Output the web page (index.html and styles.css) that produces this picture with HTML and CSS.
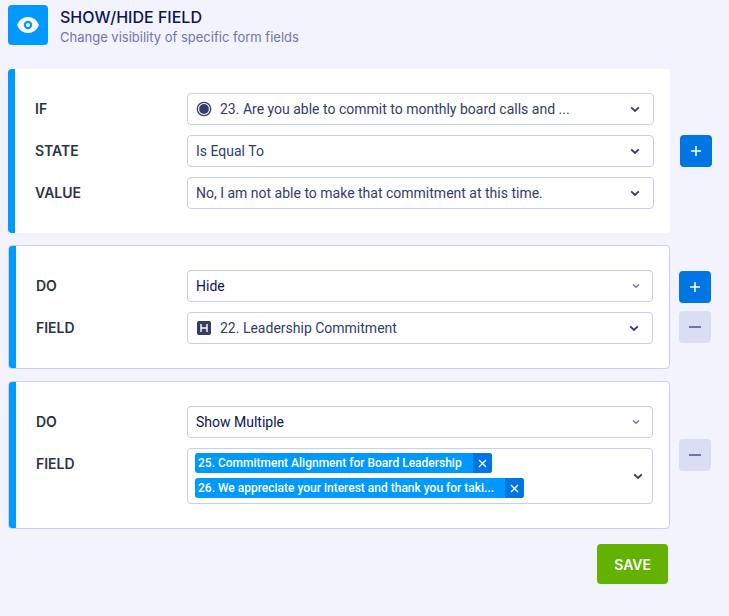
FILE: index.html
```html
<!DOCTYPE html>
<html lang="en">
<head>
    <meta charset="UTF-8">
    <meta name="viewport" content="width=device-width, initial-scale=1.0">
    <title>Show/Hide Field</title>
    <link rel="stylesheet" href="styles.css">
</head>
<body>
    <header class="header">
        <div class="header-icon">
            <svg width="22" height="16" viewBox="0 0 22 16" aria-hidden="true">
                <path fill="#fff" fill-rule="evenodd" d="M11 0C6 0 2.4 3 .4 7.2a1.8 1.8 0 0 0 0 1.6C2.4 13 6 16 11 16s8.600-3 10.600-7.200a1.800 1.800 0 0 0 0-1.600C19.600 3 16 0 11 0Zm0 3.800a4.200 4.200 0 1 1 0 8.400 4.200 4.200 0 0 1 0-8.400Z"/>
                <circle cx="11" cy="8" r="2" fill="#fff"/>
            </svg>
        </div>
        <div class="header-text">
            <h1>SHOW/HIDE FIELD</h1>
            <p>Change visibility of specific form fields</p>
        </div>
    </header>

    <form class="rules">
        <section class="rule">
            <div class="card">
                <div class="row">
                    <label for="if-field">IF</label>
                    <div class="select has-icon">
                        <select id="if-field">
                            <option>23. Are you able to commit to monthly board calls and ...</option>
                        </select>
                        <svg class="type-icon" width="16" height="16" viewBox="0 0 16 16" aria-hidden="true">
                            <circle cx="8" cy="8" r="6.700" fill="none" stroke="#343c6a" stroke-width="1.300"/>
                            <circle cx="8" cy="8" r="4.900" fill="#343c6a"/>
                        </svg>
                        <svg class="arrow" width="10" height="8" viewBox="0 0 10 8" aria-hidden="true"><path d="M1.200 2.400 5 6l3.800-3.600"/></svg>
                    </div>
                </div>
                <div class="row">
                    <label for="if-state">STATE</label>
                    <div class="select">
                        <select id="if-state">
                            <option>Is Equal To</option>
                        </select>
                        <svg class="arrow" width="10" height="8" viewBox="0 0 10 8" aria-hidden="true"><path d="M1.200 2.400 5 6l3.800-3.600"/></svg>
                    </div>
                </div>
                <div class="row">
                    <label for="if-value">VALUE</label>
                    <div class="select">
                        <select id="if-value">
                            <option>No, I am not able to make that commitment at this time.</option>
                        </select>
                        <svg class="arrow" width="10" height="8" viewBox="0 0 10 8" aria-hidden="true"><path d="M1.200 2.400 5 6l3.800-3.600"/></svg>
                    </div>
                </div>
            </div>
            <div class="actions">
                <button type="button" class="btn-add" aria-label="Add condition">
                    <svg width="12" height="12" viewBox="0 0 12 12" aria-hidden="true"><path d="M6 1v10M1 6h10"/></svg>
                </button>
            </div>
        </section>

        <section class="rule rule-action">
            <div class="card">
                <div class="row">
                    <label for="do-hide">DO</label>
                    <div class="select plain">
                        <select id="do-hide">
                            <option>Hide</option>
                            <option>Show</option>
                        </select>
                        <svg class="arrow" width="8" height="6" viewBox="0 0 8 6" aria-hidden="true"><path d="M1 1.500l3 2.800 3-2.800"/></svg>
                    </div>
                </div>
                <div class="row">
                    <label for="hide-field">FIELD</label>
                    <div class="select has-icon">
                        <select id="hide-field">
                            <option>22. Leadership Commitment</option>
                        </select>
                        <svg class="type-icon" width="16" height="16" viewBox="0 0 16 16" aria-hidden="true">
                            <rect x="1" y="1" width="14" height="14" rx="2" fill="#343c6a"/>
                            <path d="M5 4v8M11 4v8M5 8h6" fill="none" stroke="#fff" stroke-width="1.400"/>
                        </svg>
                        <svg class="arrow" width="10" height="8" viewBox="0 0 10 8" aria-hidden="true"><path d="M1.200 2.400 5 6l3.800-3.600"/></svg>
                    </div>
                </div>
            </div>
            <div class="actions">
                <button type="button" class="btn-add" aria-label="Add action">
                    <svg width="12" height="12" viewBox="0 0 12 12" aria-hidden="true"><path d="M6 1v10M1 6h10"/></svg>
                </button>
                <button type="button" class="btn-remove" aria-label="Remove action">
                    <svg width="12" height="12" viewBox="0 0 12 12" aria-hidden="true"><path d="M0 6h12"/></svg>
                </button>
            </div>
        </section>

        <section class="rule rule-action">
            <div class="card">
                <div class="row">
                    <label for="do-show">DO</label>
                    <div class="select plain">
                        <select id="do-show">
                            <option>Show Multiple</option>
                            <option>Hide Multiple</option>
                        </select>
                        <svg class="arrow" width="8" height="6" viewBox="0 0 8 6" aria-hidden="true"><path d="M1 1.500l3 2.800 3-2.800"/></svg>
                    </div>
                </div>
                <div class="row">
                    <label for="show-fields">FIELD</label>
                    <div class="multi">
                        <ul class="tags">
                            <li class="tag">
                                <span>25. Commitment Alignment for Board Leadership</span>
                                <button type="button" aria-label="Remove field 25">
                                    <svg width="9" height="9" viewBox="0 0 9 9" aria-hidden="true"><path d="M1 1l7 7M8 1 1 8"/></svg>
                                </button>
                            </li>
                            <li class="tag">
                                <span>26. We appreciate your interest and thank you for taki...</span>
                                <button type="button" aria-label="Remove field 26">
                                    <svg width="9" height="9" viewBox="0 0 9 9" aria-hidden="true"><path d="M1 1l7 7M8 1 1 8"/></svg>
                                </button>
                            </li>
                        </ul>
                        <button type="button" id="show-fields" class="multi-toggle" aria-haspopup="listbox">
                            <svg class="arrow" width="10" height="8" viewBox="0 0 10 8" aria-hidden="true"><path d="M1.200 2.400 5 6l3.800-3.600"/></svg>
                        </button>
                    </div>
                </div>
            </div>
            <div class="actions">
                <button type="button" class="btn-remove" aria-label="Remove action">
                    <svg width="12" height="12" viewBox="0 0 12 12" aria-hidden="true"><path d="M0 6h12"/></svg>
                </button>
            </div>
        </section>

        <div class="footer">
            <button type="submit" class="btn-save">SAVE</button>
        </div>
    </form>
</body>
</html>
```
FILE: styles.css
```css
:root {
    --bg: #f3f3fe;
    --navy: #0a1551;
    --text: #343c6a;
    --label: #2c3345;
    --muted: #6f76a7;
    --border: #c8ceed;
    --blue: #0099ff;
    --blue-dark: #0075e3;
    --green: #64b200;
}

* {
    margin: 0;
    padding: 0;
    box-sizing: border-box;
}

body {
    font-family: Inter, "Liberation Sans", sans-serif;
    font-size: 13px;
    background: var(--bg);
    color: var(--text);
    padding: 5px 17px 32px 8px;
}

svg {
    display: block;
}

button {
    border: none;
    cursor: pointer;
    font-family: inherit;
}

.header {
    display: flex;
    gap: 12px;
    margin-bottom: 24px;
}

.header-icon {
    display: flex;
    align-items: center;
    justify-content: center;
    width: 40px;
    height: 40px;
    border-radius: 4px;
    background: var(--blue);
}

.header h1 {
    font-size: 16px;
    font-weight: 500;
    line-height: 24px;
    color: var(--navy);
}

.header p {
    line-height: 16px;
    color: var(--muted);
}

.rules {
    display: flex;
    flex-direction: column;
    gap: 12px;
}

.rule {
    display: flex;
    align-items: center;
    gap: 10px;
}

.rule-action {
    gap: 9px;
    padding-right: 1px;
}

.card {
    flex: 1;
    min-width: 0;
    display: flex;
    flex-direction: column;
    gap: 10px;
    padding: 24px 16px 24px 27px;
    border-radius: 4px;
    background: linear-gradient(to right, var(--blue) 7px, #fff 7px);
}

.rule-action .card {
    border: 1px solid var(--border);
}

.row {
    display: grid;
    grid-template-columns: 152px 1fr;
}

.rule-action .row {
    grid-template-columns: 151px 1fr;
}

.row label {
    font-size: 14px;
    font-weight: 600;
    line-height: 32px;
    color: var(--label);
}

/* select, type icon and arrow share one grid cell */
.select {
    display: grid;
    align-items: center;
    min-width: 0;
}

.select > * {
    grid-area: 1 / 1;
}

.select select {
    appearance: none;
    width: 100%;
    height: 32px;
    padding: 0 32px 0 8px;
    border: 1px solid var(--border);
    border-radius: 4px;
    background: #fff;
    color: var(--text);
    font-family: Roboto, "Liberation Sans", sans-serif;
    font-size: 14px;
}

.has-icon select {
    padding-left: 32px;
}

.plain select {
    color: var(--navy);
}

.type-icon {
    margin-left: 9px;
    pointer-events: none;
}

.arrow {
    justify-self: end;
    margin-right: 14px;
    fill: none;
    stroke: var(--text);
    stroke-width: 1.8;
    pointer-events: none;
}

.plain .arrow {
    stroke: var(--muted);
    stroke-width: 1.5;
    margin-right: 13px;
}

.multi {
    display: flex;
    justify-content: space-between;
    border: 1px solid var(--border);
    border-radius: 4px;
    background: #fff;
}

.tags {
    display: flex;
    flex-direction: column;
    align-items: flex-start;
    gap: 5px;
    padding: 4px 0 5px 7px;
    list-style: none;
}

.tag {
    display: flex;
    height: 20px;
    border-radius: 3px;
    overflow: hidden;
    background: var(--blue);
    color: #fff;
    font-family: Roboto, "Liberation Sans", sans-serif;
    font-size: 12px;
    font-weight: 500;
    line-height: 20px;
}

.tag span {
    padding: 0 11px 0 3px;
}

.tag button {
    display: flex;
    align-items: center;
    justify-content: center;
    width: 19px;
    background: var(--blue-dark);
}

.tag svg {
    fill: none;
    stroke: #fff;
    stroke-width: 1.3;
}

.multi-toggle {
    display: flex;
    align-items: center;
    justify-content: center;
    width: 28px;
    background: none;
}

.multi-toggle .arrow {
    margin: 0;
}

.actions {
    display: flex;
    flex-direction: column;
    gap: 8px;
}

.btn-add,
.btn-remove {
    display: flex;
    align-items: center;
    justify-content: center;
    width: 32px;
    height: 32px;
    border-radius: 4px;
}

.btn-add {
    background: var(--blue-dark);
}

.btn-remove {
    background: #dadef3;
}

.btn-add svg {
    stroke: #fff;
    stroke-width: 1.5;
}

.btn-remove svg {
    stroke: var(--muted);
    stroke-width: 2;
}

.footer {
    display: flex;
    justify-content: flex-end;
    padding: 3px 44px 0 0;
}

.btn-save {
    height: 40px;
    padding: 0 17px;
    border-radius: 4px;
    background: var(--green);
    color: #fff;
    font-size: 14px;
    font-weight: 600;
}
```
